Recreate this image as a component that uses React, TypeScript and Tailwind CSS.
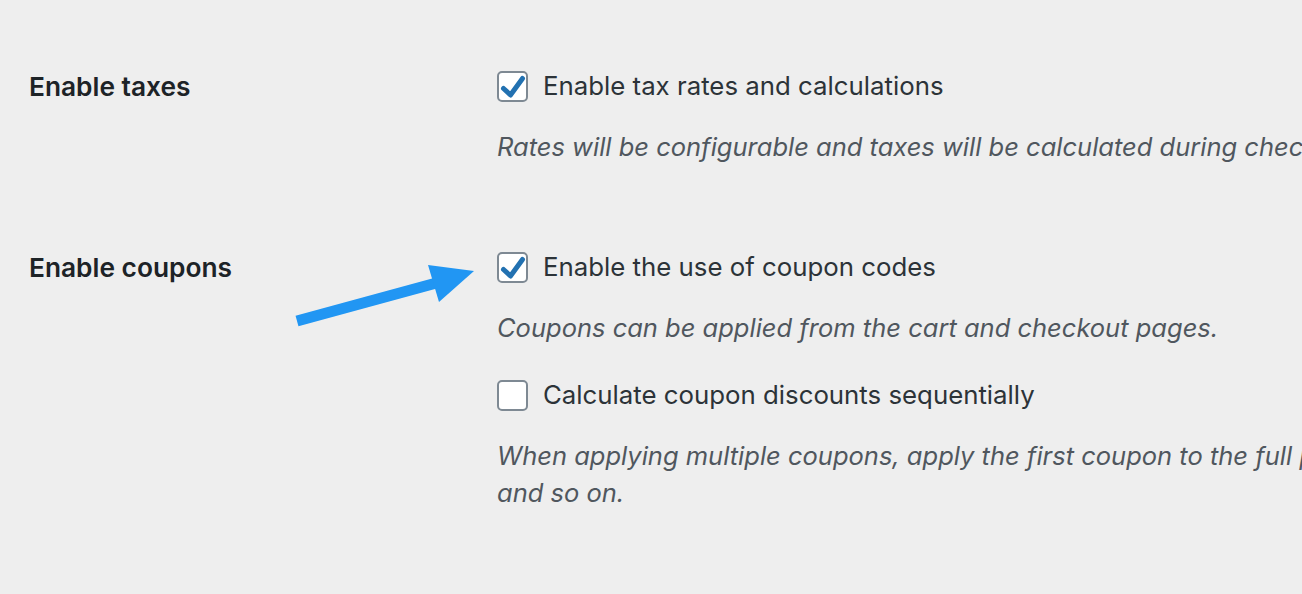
import React from 'react';

function Checkbox({ checked }: { checked: boolean }) {
  return (
    <span className="relative flex h-[31px] w-[31px] shrink-0 items-center justify-center rounded-[5px] border-2 border-[#7e8993] bg-white">
      {checked && (
        <svg className="absolute left-[-2px] top-[-2px]" width="31" height="31" viewBox="0 0 31 31">
          <path d="M6.5 17.5 L13.5 24 L25.5 7.5" fill="none" stroke="#2271b1" strokeWidth="5" strokeLinecap="round" strokeLinejoin="round" />
        </svg>
      )}
    </span>
  );
}

function Option({ checked, label }: { checked: boolean; label: string }) {
  return (
    <label className="flex h-[32px] items-center gap-[15px] text-[25.8px] text-[#2c3338]">
      <Checkbox checked={checked} />
      <span className="whitespace-nowrap">{label}</span>
    </label>
  );
}

function Description({ children }: { children: React.ReactNode }) {
  return <p className="whitespace-nowrap text-[25.5px] italic leading-[37px] text-[#50575e]">{children}</p>;
}

export default function App() {
  return (
    <div
      className="relative h-[594px] w-[1302px] overflow-hidden bg-[#eeeeee]"
      style={{ fontFamily: 'Inter, "Noto Sans", sans-serif' }}
    >
      <div className="flex flex-col gap-[86px] pl-[29px] pt-[70px]">
        {/* Enable taxes */}
        <div className="flex">
          <div className="flex h-[34px] w-[468px] shrink-0 items-center text-[26.3px] font-semibold text-[#1d2327]">
            Enable taxes
          </div>
          <div className="flex w-[1500px] shrink-0 flex-col gap-[26px]">
            <Option checked label="Enable tax rates and calculations" />
            <Description>Rates will be configurable and taxes will be calculated during checkout.</Description>
          </div>
        </div>

        {/* Enable coupons */}
        <div className="flex">
          <div className="flex h-[34px] w-[468px] shrink-0 items-center text-[26.3px] font-semibold text-[#1d2327]">
            Enable coupons
          </div>
          <div className="flex w-[1500px] shrink-0 flex-col">
            <Option checked label="Enable the use of coupon codes" />
            <div className="mt-[26px]">
              <Description>Coupons can be applied from the cart and checkout pages.</Description>
            </div>
            <div className="mt-[33px]">
              <Option checked={false} label="Calculate coupon discounts sequentially" />
            </div>
            <div className="mt-[26px]">
              <Description>
                When applying multiple coupons, apply the first coupon to the full price and the second coupon to the discounted price
                <br />
                and so on.
              </Description>
            </div>
          </div>
        </div>
      </div>

      {/* annotation arrow */}
      <svg className="pointer-events-none absolute left-0 top-0" width="1302" height="594" viewBox="0 0 1302 594">
        <line x1="297" y1="321" x2="440" y2="282" stroke="#2196f3" strokeWidth="11" />
        <polygon points="428,265 474,271 439,302" fill="#2196f3" />
      </svg>
    </div>
  );
}
